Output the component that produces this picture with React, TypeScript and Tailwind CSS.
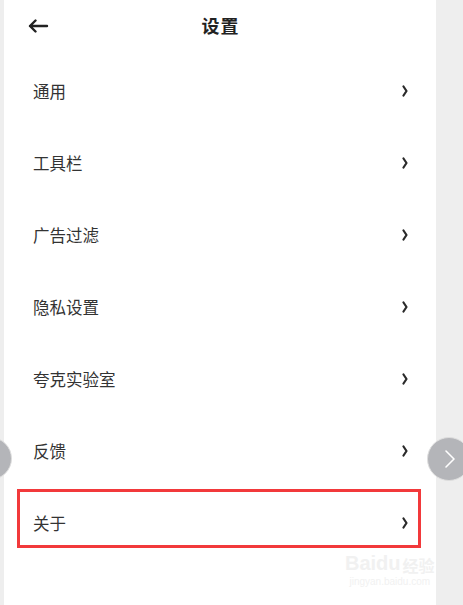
const items = ["通用", "工具栏", "广告过滤", "隐私设置", "夸克实验室", "反馈", "关于"];

function Chevron() {
  return (
    <svg width="6" height="12" viewBox="0 0 6 12" className="mr-[28px]">
      <path d="M1.5 1.5 L4.5 6 L1.5 10.5" fill="none" stroke="#2a2a2a" strokeWidth="2.2" strokeLinecap="round" strokeLinejoin="round" />
    </svg>
  );
}

export default function App() {
  return (
    <div
      className="relative w-[463px] h-[605px] overflow-hidden bg-[#eeeeee]"
      style={{ fontFamily: '"Noto Sans CJK SC", "Noto Sans", sans-serif' }}
    >
      <div className="ml-[4px] w-[432px] h-full bg-white">
        {/* 顶部栏 */}
        <div className="relative h-[50px] flex items-center justify-center">
          <svg width="22" height="14" viewBox="0 0 22 14" className="absolute left-[23px] top-[19px]">
            <path d="M20 7 H3 M8.5 1.5 L3 7 L8.5 12.5" fill="none" stroke="#222" strokeWidth="2.4" strokeLinecap="round" strokeLinejoin="round" />
          </svg>
          <span className="text-[18px] font-bold text-[#222] tracking-[1px] ml-[1px]">设置</span>
        </div>

        <div className="pt-[5px]">
          {items.map((label) => (
            <div key={label} className="h-[72px] flex items-center justify-between pl-[29px]">
              <span className="text-[16.5px] text-[#333]">{label}</span>
              <Chevron />
            </div>
          ))}
        </div>
      </div>

      {/* 标注框 */}
      <div className="absolute left-[17px] top-[489px] w-[404px] h-[59px] border-[3px] border-[#f2393b]" />

      {/* 左右翻页按钮 */}
      <div className="absolute left-[-31px] top-[437px] w-[43px] h-[43px] rounded-full bg-[#b4b5b9] border border-[#dedede]" />
      <div className="absolute left-[427px] top-[437px] w-[44px] h-[44px] rounded-full bg-[#b4b5b9] border border-[#dedede] flex items-center">
        <svg width="12" height="20" viewBox="0 0 12 20" className="ml-[16px]">
          <path d="M2 2 L10 10 L2 18" fill="none" stroke="#ffffff" strokeWidth="1.6" strokeLinecap="round" strokeLinejoin="round" />
        </svg>
      </div>

      {/* 水印 */}
      <div className="absolute left-[345px] top-[553px] flex flex-col items-center text-[#f1f1f1] leading-none">
        <div className="flex items-end gap-[2px]">
          <span className="text-[20px] font-bold" style={{ fontFamily: '"Liberation Sans", sans-serif' }}>Baidu</span>
          <span className="text-[16px] font-bold">经验</span>
        </div>
        <span className="mt-[4px] text-[10px]" style={{ fontFamily: '"Liberation Sans", sans-serif' }}>jingyan.baidu.com</span>
      </div>
    </div>
  );
}
